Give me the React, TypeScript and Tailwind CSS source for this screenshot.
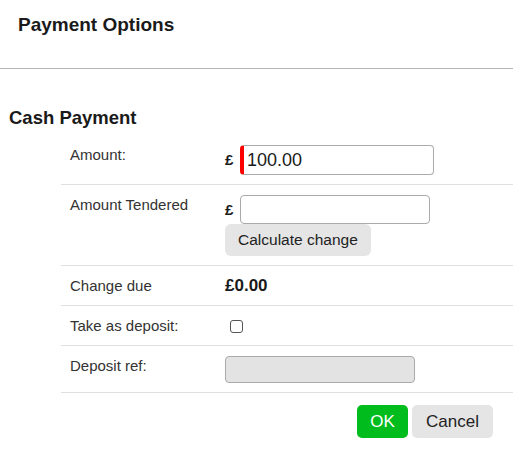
const font = { fontFamily: '"Liberation Sans", Arial, sans-serif' };

const Row = ({
  label,
  children,
}: {
  label: string;
  children: React.ReactNode;
}) => (
  <div className="flex border-b border-[#e0e0e0] pt-[10px] pb-[9px] leading-[20px]">
    <div className="w-[164px] shrink-0 pl-[9px] text-[15px] leading-[20px] text-[#333]">
      {label}
    </div>
    <div className="flex-1">{children}</div>
  </div>
);

export default function App() {
  return (
    <div className="w-[513px] h-[457px] bg-white text-[#1a1a1a]" style={font}>
      <div className="h-[69px] border-b border-[#b5b5b5] px-[18px] pt-[13px]">
        <h1 className="text-[19px] leading-[24px] font-bold">Payment Options</h1>
      </div>

      <h2 className="mt-[37px] pl-[9px] text-[18.5px] leading-[24px] font-bold">
        Cash Payment
      </h2>

      <div className="ml-[61px] mt-[5px]">
        <Row label="Amount:">
          <div className="flex items-center">
            <span className="w-[15px] text-[15px] font-bold">£</span>
            <input
              defaultValue="100.00"
              className="w-[194px] h-[30px] rounded-[4px] border border-[#aaa] border-l-[4px] border-l-[#f00] bg-white pl-[3px] text-[18px] outline-none"
            />
          </div>
        </Row>

        <Row label="Amount Tendered">
          <div className="flex items-center">
            <span className="w-[15px] text-[15px] font-bold">£</span>
            <input className="w-[190px] h-[29px] rounded-[4px] border border-[#aaa] bg-white outline-none" />
          </div>
          <button className="block h-[32px] rounded-[6px] bg-[#e5e5e5] px-[13px] text-[15.5px] text-[#222]">
            Calculate change
          </button>
        </Row>

        <Row label="Change due">
          <div className="h-[20px] flex items-center text-[17px] font-bold">£0.00</div>
        </Row>

        <Row label="Take as deposit:">
          <div className="h-[20px] flex items-center pl-[5px]">
            <div className="w-[13px] h-[13px] rounded-[3px] border border-[#555] bg-white" />
          </div>
        </Row>

        <Row label="Deposit ref:">
          <div className="w-[190px] h-[27px] rounded-[4px] border border-[#aaa] bg-[#e3e3e3]" />
        </Row>
      </div>

      <div className="flex justify-end gap-[4px] pr-[20px] pt-[12px]">
        <button className="w-[51px] h-[33px] rounded-[5px] bg-[#00bc1c] text-[17px] text-white">
          OK
        </button>
        <button className="w-[81px] h-[33px] rounded-[5px] bg-[#e5e5e5] text-[17px] text-[#222]">
          Cancel
        </button>
      </div>
    </div>
  );
}
